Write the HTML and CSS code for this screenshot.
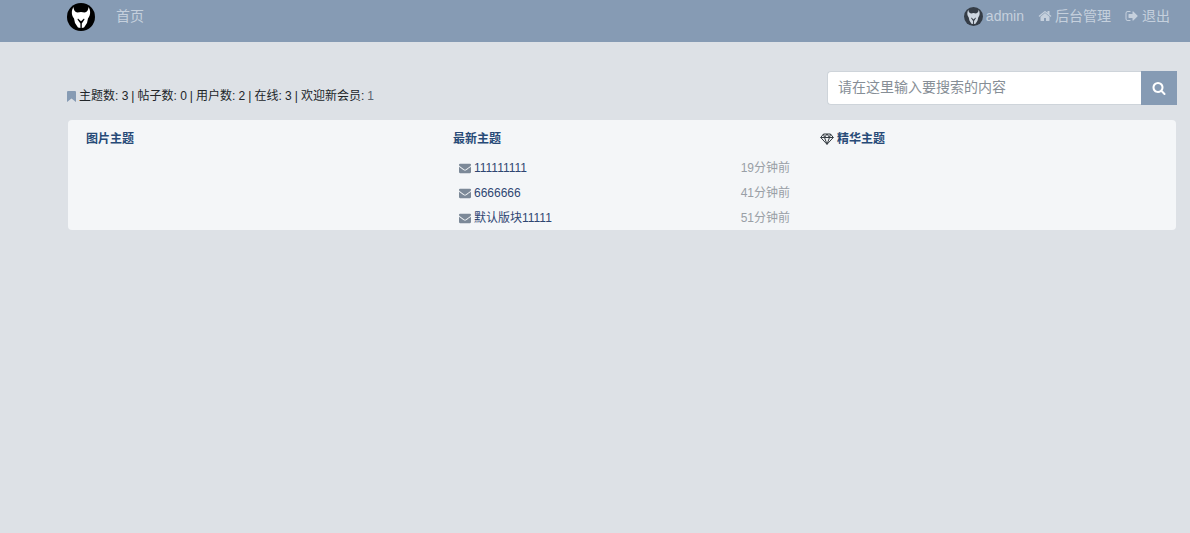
FILE: index.html
```
<!DOCTYPE html>
<html lang="zh-CN">
<head>
<meta charset="utf-8">
<title>首页</title>
<link rel="stylesheet" href="styles.css">
</head>
<body>
<svg class="defs" aria-hidden="true">
  <symbol id="logo" viewBox="0 0 28 28">
    <circle class="disc" cx="14" cy="14" r="14"/>
    <path class="mask" d="M6.500 4C4 8 4.500 12.500 7 15.500L8 20 11 24.500 13.400 25 13.400 20.500 10.500 16.500 11 15.500 14 18.300 17 15.500 17.500 16.500 14.800 20.500 14.800 25 17 24.500 20 20 21 15.500C23.500 12.500 24 8 21.500 4 21.500 7 20 9.200 17.500 9.500L14 9 10.500 9.500C8 9.200 6.500 7 6.500 4Z"/>
  </symbol>
  <symbol id="mail" viewBox="0 0 1792 1792"><path d="M1792 710v794q0 66-47 113t-113 47h-1472q-66 0-113-47t-47-113v-794q44 49 101 87 362 246 497 345 57 42 92.500 65.500t94.500 48 110 24.500h2q51 0 110-24.500t94.500-48 92.500-65.500q170-123 498-345 57-39 100-87zm0-294q0 79-49 151t-122 123q-376 261-468 325-10 7-42.500 31t-54 38.500-52 32.500-57.500 27-50 9h-2q-23 0-50-9t-57.500-27-52-32.500-54-38.500-42.500-31q-91-64-262-182.500t-205-142.500q-62-42-117-115.500t-55-136.500q0-78 41.500-130t118.500-52h1472q65 0 112.500 47t47.500 113z"/></symbol>
</svg>
<header class="topbar">
  <a class="brand" href="#" aria-label="首页"><svg class="logo"><use href="#logo"/></svg></a>
  <nav class="nav-main"><a href="#">首页</a></nav>
  <nav class="nav-user">
    <a href="#"><svg class="avatar"><use href="#logo"/></svg>admin</a>
    <a href="#"><svg class="icon" viewBox="0 0 1792 1792"><path d="M1472 992v480q0 26-19 45t-45 19h-384v-384h-256v384h-384q-26 0-45-19t-19-45v-480q0-1 .5-3t.5-3l575-474 575 474q1 2 1 6zm223-69l-62 74q-8 9-21 11h-3q-13 0-21-7l-692-577-692 577q-12 8-24 7-13-2-21-11l-62-74q-8-10-7-23.500t11-21.500l719-599q32-26 76-26t76 26l244 204v-195q0-14 9-23t23-9h192q14 0 23 9t9 23v408l219 182q10 8 11 21.500t-7 23.500z"/></svg>后台管理</a>
    <a href="#"><svg class="icon" viewBox="0 0 1792 1792"><path d="M704 1440q0 4 1 20t.5 26.500-3 23.500-10 19.500-20.500 6.500h-320q-119 0-203.500-84.500t-84.500-203.500v-704q0-119 84.500-203.500t203.500-84.500h320q13 0 22.500 9.500t9.500 22.500q0 4 1 20t.5 26.500-3 23.500-10 19.500-20.500 6.500h-320q-66 0-113 47t-47 113v704q0 66 47 113t113 47h312l11.500 1 11.500 3 8 5.500 7 9 2 13.500zm928-544q0 26-19 45l-544 544q-19 19-45 19t-45-19-19-45v-288h-448q-26 0-45-19t-19-45v-384q0-26 19-45t45-19h448v-288q0-26 19-45t45-19 45 19l544 544q19 19 19 45z"/></svg>退出</a>
  </nav>
</header>
<main class="container">
  <div class="tools">
    <p class="stats"><svg class="bookmark" viewBox="0 0 9 11"><path d="M0 1Q0 0 1 0H8Q9 0 9 1V11L4.500 7.500 0 11Z"/></svg><span>主题数: 3</span><span>|</span><span>帖子数: 0</span><span>|</span><span>用户数: 2</span><span>|</span><span>在线: 3</span><span>|</span><span>欢迎新会员:</span><a href="#">1</a></p>
    <form class="search">
      <input type="text" aria-label="搜索" placeholder="请在这里输入要搜索的内容">
      <button type="submit" aria-label="搜索"><svg viewBox="0 0 1792 1792"><path d="M1216 832q0-185-131.500-316.500t-316.500-131.500-316.500 131.500-131.500 316.500 131.500 316.500 316.500 131.500 316.500-131.500 131.500-316.500zm512 832q0 52-38 90t-90 38q-54 0-90-38l-343-342q-179 124-399 124-143 0-273.500-55.500t-225-150-150-225-55.500-273.500 55.500-273.500 150-225 225-150 273.500-55.500 273.500 55.500 225 150 150 225 55.500 273.500q0 220-124 399l343 343q37 37 37 90z"/></svg></button>
    </form>
  </div>
  <div class="panel">
    <section><h2>图片主题</h2></section>
    <section>
      <h2>最新主题</h2>
      <ul class="threads">
        <li><svg class="mail"><use href="#mail"/></svg><a href="#">111111111</a><time>19分钟前</time></li>
        <li><svg class="mail"><use href="#mail"/></svg><a href="#">6666666</a><time>41分钟前</time></li>
        <li><svg class="mail"><use href="#mail"/></svg><a href="#">默认版块11111</a><time>51分钟前</time></li>
      </ul>
    </section>
    <section><h2><svg class="diamond" viewBox="0 0 14 12"><path d="M3.500 1H10.500L13.300 4.500 7 11.300.7 4.500ZM.7 4.500H13.300M3.500 1L4.500 4.500 7 11.300 9.500 4.500 10.500 1M4.500 4.500L7 1 9.500 4.500"/></svg>精华主题</h2></section>
  </div>
</main>
</body>
</html>
```
FILE: styles.css
```
* { box-sizing: border-box; }
body {
  margin: 0;
  background: #dde1e6;
  color: #212529;
  font: 12px/18px "Liberation Sans", "Noto Sans CJK SC", sans-serif;
}
a { color: inherit; text-decoration: none; }
svg { flex: none; fill: currentColor; }
.defs { position: absolute; width: 0; height: 0; }

.topbar {
  display: flex;
  align-items: flex-start;
  height: 42px;
  padding: 3px 20px 0 67px;
  background: #869bb4;
  color: #c5d0dd;
  font-size: 14px;
  line-height: 26px;
}
.disc { fill: #000; }
.mask { fill: #fff; }
.brand { display: flex; margin-right: 21px; }
.logo { width: 28px; height: 28px; }
.nav-user { display: flex; gap: 14px; margin-left: auto; }
.nav-user a { display: flex; align-items: center; gap: 3px; }
.avatar { width: 19px; height: 19px; opacity: .6; }
.icon { width: 14px; height: 14px; }

.container { padding: 29px 13px 0 67px; }
.tools {
  display: flex;
  justify-content: space-between;
  align-items: flex-end;
  margin-bottom: 15px;
}
.stats { display: flex; align-items: center; gap: 3px; margin: 0; }
.stats a { color: #5a6673; }
.bookmark { width: 9px; height: 11px; color: #869bb4; }
.search { display: flex; width: 350px; height: 34px; }
.search input {
  flex: 1;
  min-width: 0;
  padding: 0 10px 2px;
  border: 1px solid #ced4da;
  border-right: 0;
  border-radius: 4px 0 0 4px;
  background: #fff;
  font: inherit;
  font-size: 14px;
}
.search input::placeholder { color: #868e96; opacity: 1; }
.search button {
  display: grid;
  place-items: center;
  width: 36px;
  padding: 0;
  border: 0;
  background: #869bb4;
  color: #fff;
}
.search button svg { width: 14px; height: 14px; }

.panel {
  display: grid;
  grid-template-columns: repeat(3, 1fr);
  gap: 30px;
  min-height: 110px;
  margin: 0 1px;
  padding: 10px 19px 0 18px;
  border-radius: 4px;
  background: #f4f6f8;
}
.panel h2 {
  display: flex;
  align-items: center;
  gap: 3px;
  margin: 0;
  color: #274a77;
  font-size: 12px;
  line-height: 18px;
}
.diamond {
  width: 14px;
  height: 12px;
  fill: none;
  stroke: #333a40;
  stroke-width: 1;
}
.threads { margin: 7px 0 0; padding: 0 0 0 6px; list-style: none; }
.threads li {
  display: flex;
  align-items: center;
  gap: 3px;
  height: 25px;
  color: #2f4672;
}
.mail { width: 12px; height: 12px; color: #7c8998; }
.threads time { margin-left: auto; color: #999fa6; }
```
